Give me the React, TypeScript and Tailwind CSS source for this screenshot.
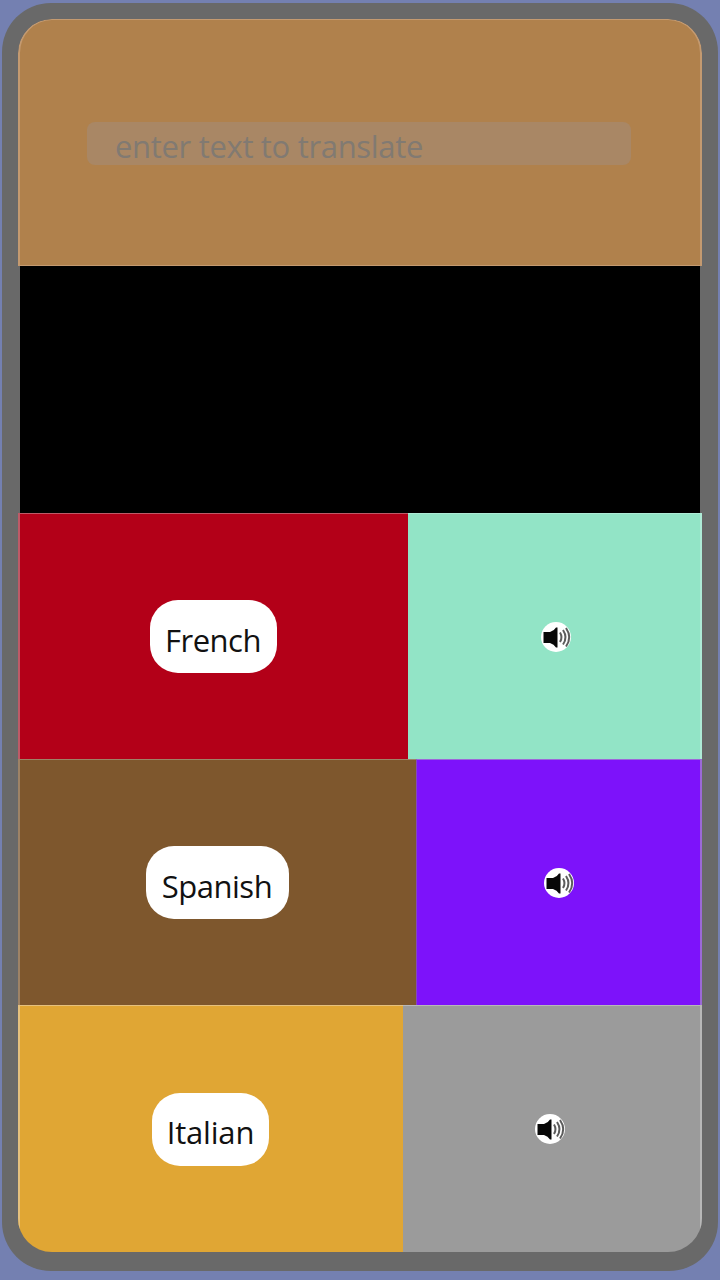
type Language = {
  name: string;
  rowClass: string;
  labelClass: string;
  pillClass: string;
  textClass: string;
  soundClass: string;
};

const languages: Language[] = [
  {
    name: "French",
    rowClass: "h-[246px]",
    labelClass: "w-[390px] bg-[#b30018] border-[#be5a67]",
    pillClass: "w-[127px]",
    textClass: "tracking-[-0.5px]",
    soundClass: "bg-[#92e4c6] border-[#aeebd6] pl-[3px]",
  },
  {
    name: "Spanish",
    rowClass: "h-[246px]",
    labelClass: "w-[398px] bg-[#7e572d] border-[#9e8366]",
    pillClass: "w-[143px]",
    textClass: "tracking-[-0.5px]",
    soundClass: "bg-[#7d12fa] border-[#9c69d8] border-l border-l-[#8549b8] pl-px",
  },
  {
    name: "Italian",
    rowClass: "h-[247px]",
    labelClass: "w-[385px] bg-[#e0a634] border-[#e5c17e]",
    pillClass: "w-[117px]",
    textClass: "tracking-[-0.2px]",
    soundClass: "bg-[#9b9b9b] border-[#b8b8b8] pr-[3px]",
  },
];

function SpeakerIcon() {
  return (
    <svg className="size-[30px] overflow-visible" viewBox="0 0 30 30" fill="none">
      <circle cx="15" cy="15" r="15" fill="#fff" />
      <path d="M2.500 10h6.500q4-1 6-4.500h1.500v20H15q-2-3.500-6-4.500H2.500z" fill="#080808" />
      <path
        d="M19 10.500q3 5 0 9.500M22 8q5 7.500 0 14.500M25 6q6.500 9.500 0 18.500"
        stroke="#5c5c5c"
        strokeWidth="2"
      />
    </svg>
  );
}

function LanguageRow({ language }: { language: Language }) {
  return (
    <div className={`flex ${language.rowClass}`}>
      <div
        className={`flex shrink-0 items-center justify-center border-l-2 border-t pr-[2px] ${language.labelClass}`}
      >
        <button
          className={`flex h-[73px] items-center justify-center rounded-[28px] bg-white pt-[7px] text-[31px] text-[#111] ${language.pillClass}`}
        >
          <span className={language.textClass}>{language.name}</span>
        </button>
      </div>
      <div className={`flex flex-1 items-center justify-center border-r-2 border-t ${language.soundClass}`}>
        <button aria-label={`Listen in ${language.name}`}>
          <SpeakerIcon />
        </button>
      </div>
    </div>
  );
}

export default function App() {
  return (
    <main className="h-[1280px] w-[720px] bg-[#7480b1] px-[2px] pt-[3px] font-['Open_Sans','Noto_Sans',sans-serif]">
      <div className="h-[1268px] rounded-[49px] bg-[#696969] p-4">
        <div className="h-[1233px] overflow-hidden rounded-[34px]">
          <div className="flex h-[247px] items-center justify-center rounded-t-[34px] border-x-2 border-y border-[#c49a70] bg-[#b0814c] pr-[2px] pt-[2px]">
            <input
              className="h-[43px] w-[544px] rounded-lg bg-[#a98765] pl-7 pt-[6px] text-[31px] tracking-[-0.32px] outline-none placeholder:text-[#817a72]"
              placeholder="enter text to translate"
            />
          </div>
          <div className="mx-[2px] h-[247px] bg-black" />
          {languages.map((language) => (
            <LanguageRow key={language.name} language={language} />
          ))}
        </div>
      </div>
    </main>
  );
}
